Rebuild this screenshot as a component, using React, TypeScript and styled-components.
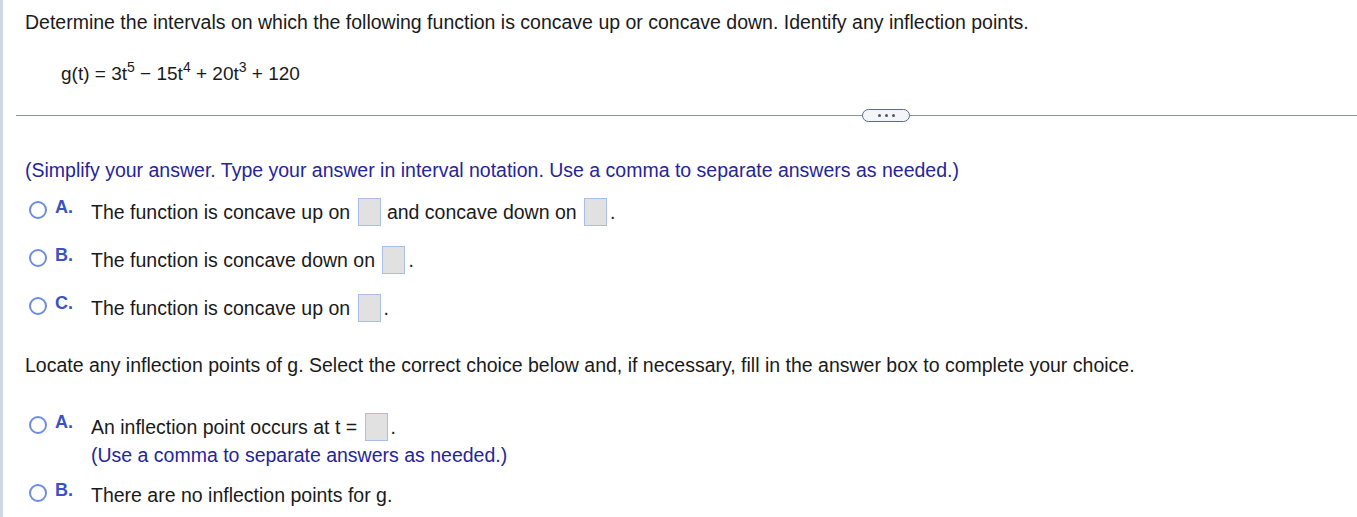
import React from 'react';
import styled, { createGlobalStyle } from 'styled-components';

const GlobalStyle = createGlobalStyle`
  html, body {
    margin: 0;
    padding: 0;
    background: #ffffff;
  }
  body {
    font-family: Arial, "Liberation Sans", Helvetica, sans-serif;
    color: #1a1a1a;
  }
`;

const Page = styled.div`
  min-height: 517px;
  border-left: 3px solid #cfd6e3;
  box-sizing: border-box;
  overflow: hidden;
`;

const Question = styled.div`
  padding: 11px 0 0 22px;
`;

const Prompt = styled.div`
  font-size: 19.5px;
  line-height: 22px;
  white-space: nowrap;
`;

const Equation = styled.div`
  margin: 30px 0 0 36px;
  font-size: 19px;
  line-height: 22px;

  sup {
    font-size: 14px;
    vertical-align: 8px;
    line-height: 0;
  }
`;

const Divider = styled.div`
  position: relative;
  margin: 30px 0 0 13px;
  height: 1px;
  background: #8c94a3;
`;

const MoreButton = styled.div`
  position: absolute;
  left: 846px;
  top: -6px;
  width: 48px;
  height: 13px;
  box-sizing: border-box;
  border: 1px solid #5d6b80;
  border-radius: 7px;
  background: #f3f5f8;
  display: flex;
  align-items: center;
  justify-content: center;
  gap: 4px;
`;

const Dot = styled.span`
  width: 3px;
  height: 3px;
  border-radius: 50%;
  background: #4a5568;
`;

const Answer = styled.div`
  padding: 0 0 0 22px;
`;

const Note = styled.div<{ $top?: number }>`
  color: #25259a;
  font-size: 19.5px;
  line-height: 22px;
  white-space: nowrap;
  margin-top: ${(p) => p.$top ?? 0}px;
`;

const Choices = styled.div<{ $top: number; $gap: number }>`
  display: flex;
  flex-direction: column;
  gap: ${(p) => p.$gap}px;
  margin-top: ${(p) => p.$top}px;
`;

const Choice = styled.div`
  display: flex;
  align-items: flex-start;
`;

const Radio = styled.span`
  flex: none;
  width: 18px;
  height: 18px;
  box-sizing: border-box;
  border: 2px solid #6f8de0;
  border-radius: 50%;
  margin: 3px 0 0 4px;
`;

const Letter = styled.span`
  flex: none;
  width: 36px;
  margin-left: 8px;
  color: #3a52c4;
  font-weight: bold;
  font-size: 18px;
  line-height: 22px;
  margin-top: -2px;
`;

const Body = styled.div`
  display: flex;
  flex-direction: column;
`;

const Line = styled.div`
  font-size: 19.5px;
  line-height: 28px;
  height: 28px;
  white-space: nowrap;
`;

const Blank = styled.span<{ $right?: number }>`
  display: inline-block;
  vertical-align: top;
  width: 23px;
  height: 28px;
  box-sizing: border-box;
  background: #e1e1e1;
  border: 1px solid #a9bfe8;
  margin: 0 ${(p) => p.$right ?? 3}px 0 2px;
`;

const Heading = styled.div`
  margin-top: 32px;
  font-size: 19.5px;
  line-height: 22px;
  white-space: nowrap;
`;

export default function App() {
  return (
    <>
      <GlobalStyle />
      <Page>
        <Question>
          <Prompt>
            Determine the intervals on which the following function is concave up or concave down. Identify any
            inflection points.
          </Prompt>
          <Equation>
            g(t) = 3t<sup>5</sup> − 15t<sup>4</sup> + 20t<sup>3</sup> + 120
          </Equation>
        </Question>
        <Divider>
          <MoreButton>
            <Dot />
            <Dot />
            <Dot />
          </MoreButton>
        </Divider>
        <Answer>
          <Note $top={43}>
            (Simplify your answer. Type your answer in interval notation. Use a comma to separate answers as needed.)
          </Note>
          <Choices $top={17} $gap={20}>
            <Choice>
              <Radio />
              <Letter>A.</Letter>
              <Line>
                The function is concave up on <Blank $right={1} /> and concave down on <Blank />.
              </Line>
            </Choice>
            <Choice>
              <Radio />
              <Letter>B.</Letter>
              <Line>
                The function is concave down on <Blank />.
              </Line>
            </Choice>
            <Choice>
              <Radio />
              <Letter>C.</Letter>
              <Line>
                The function is concave up on <Blank />.
              </Line>
            </Choice>
          </Choices>
          <Heading>
            Locate any inflection points of g. Select the correct choice below and, if necessary, fill in the answer
            box to complete your choice.
          </Heading>
          <Choices $top={37} $gap={15}>
            <Choice>
              <Radio />
              <Letter>A.</Letter>
              <Body>
                <Line>
                  An inflection point occurs at t = <Blank />.
                </Line>
                <Note $top={3}>(Use a comma to separate answers as needed.)</Note>
              </Body>
            </Choice>
            <Choice>
              <Radio />
              <Letter>B.</Letter>
              <Line>There are no inflection points for g.</Line>
            </Choice>
          </Choices>
        </Answer>
      </Page>
    </>
  );
}
